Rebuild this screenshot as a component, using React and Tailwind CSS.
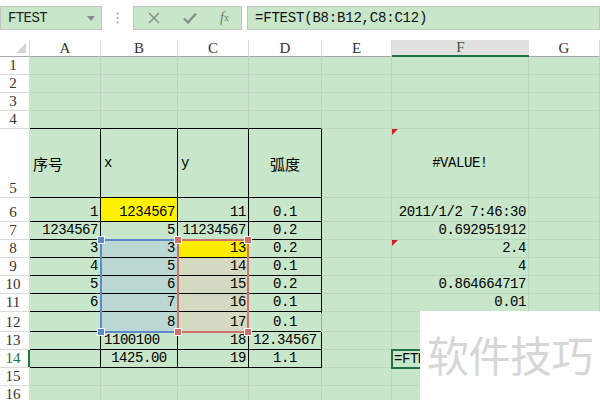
import React from "react";

const COLNAMES = ["A", "B", "C", "D", "E", "F", "G"];

const DATA = {
  5: { 0: ["序号", "l", "cjk"], 1: ["x", "l"], 2: ["y", "l"], 3: ["弧度", "c", "cjk"], 5: ["#VALUE!", "c"] },
  6: { 0: ["1", "r"], 1: ["1234567", "r"], 2: ["11", "r"], 3: ["0.1", "c"], 5: ["2011/1/2 7:46:30", "r"] },
  7: { 0: ["1234567", "r"], 1: ["5", "r"], 2: ["11234567", "r"], 3: ["0.2", "c"], 5: ["0.692951912", "r"] },
  8: { 0: ["3", "r"], 1: ["3", "r"], 2: ["13", "r"], 3: ["0.2", "c"], 5: ["2.4", "r"] },
  9: { 0: ["4", "r"], 1: ["5", "r"], 2: ["14", "r"], 3: ["0.1", "c"], 5: ["4", "r"] },
  10: { 0: ["5", "r"], 1: ["6", "r"], 2: ["15", "r"], 3: ["0.2", "c"], 5: ["0.864664717", "r"] },
  11: { 0: ["6", "r"], 1: ["7", "r"], 2: ["16", "r"], 3: ["0.1", "c"], 5: ["0.01", "r"] },
  12: { 1: ["8", "r"], 2: ["17", "r"], 3: ["0.1", "c"] },
  13: { 1: ["1100100", "l"], 2: ["18", "r"], 3: ["12.34567", "c"] },
  14: { 1: ["1425.00", "c"], 2: ["19", "r"], 3: ["1.1", "c"] },
};

function cellBg(r, c) {
  if (r === 6 && c === 1) return "bg-[#fff200]";
  if (r === 8 && c === 2) return "bg-[#fbec00]";
  if (c === 1 && r >= 8 && r <= 12) return "bg-[#bcd8d4]";
  if (c === 2 && r >= 9 && r <= 12) return "bg-[#d3dac1]";
  return "bg-[#c8e6c9]";
}

function cellBorder(r, c) {
  const inTable = r >= 5 && r <= 14 && c <= 3;
  if (inTable) return "border-r border-b border-black";
  if (r === 4 && c <= 3) return "border-r border-b border-r-[#bcd5be] border-b-black";
  return "border-r border-b border-[#bcd5be]";
}

function Cell({ r, c }) {
  const d = DATA[r] && DATA[r][c];
  const align = d ? d[1] : "l";
  const justify =
    align === "r" ? "justify-end pr-[2px]" : align === "c" ? "justify-center" : "justify-start pl-[3px]";
  const vert = r === 5 ? "items-center" : "items-end";
  const font = d && d[2] === "cjk"
    ? "font-['Noto_Sans_CJK_SC',sans-serif] text-[15px] tracking-[0px]"
    : "font-['Liberation_Mono',monospace] text-[14px] tracking-[-0.45px]";
  return (
    <div className={`flex ${vert} ${justify} ${cellBg(r, c)} ${cellBorder(r, c)} overflow-visible whitespace-nowrap text-black leading-[17px]`}>
      {d ? <span className={font}>{d[0]}</span> : null}
    </div>
  );
}

function RowHeader({ r }) {
  const active = r === 14;
  return (
    <div className={`relative flex items-end justify-center pr-[3px] bg-white border-r border-b border-[#dadada] leading-[17px] font-['Liberation_Serif',serif] text-[15px] ${active ? "text-[#217346]" : "text-[#333]"}`}>
      {r}
      {active ? <div className="absolute right-[-1px] top-0 bottom-0 w-[2px] bg-[#217346]" /> : null}
    </div>
  );
}

function ColHeader({ name }) {
  if (name === "F") {
    return (
      <div className="flex items-center justify-center bg-[#e1e1e1] border-b-2 border-[#217346] font-['Liberation_Serif',serif] text-[15px] text-[#2f5a3e] leading-none">
        {name}
      </div>
    );
  }
  return (
    <div className="flex items-center justify-center bg-white border-r border-b border-r-[#dadada] border-b-[#a8a8a8] font-['Liberation_Serif',serif] text-[15px] text-[#333] leading-none">
      {name}
    </div>
  );
}

function Handle({ color, pos }) {
  return <div className={`absolute w-[6px] h-[6px] outline outline-1 outline-white ${color} ${pos}`} />;
}

export default function App() {
  const rows = Array.from({ length: 16 }, (_, i) => i + 1);
  return (
    <div className="relative w-[600px] h-[400px] overflow-hidden bg-white">
      {/* toolbar */}
      <div className="flex items-start h-[40px] pt-[6px]">
        <div className="flex items-center w-[102px] h-[24px] bg-[#c8e6c9] border border-[#c4c4c4] pl-[7px] pr-[6px]">
          <span className="flex-1 font-['Liberation_Mono',monospace] text-[14px] tracking-[-0.6px] text-[#222]">FTEST</span>
          <svg width="8" height="5" viewBox="0 0 8 5"><path d="M0 0H8L4 5Z" fill="#8a8a8a" /></svg>
        </div>
        <div className="w-[31px] h-[24px] flex items-center justify-center">
          <svg width="3" height="12" viewBox="0 0 3 12">
            <circle cx="1.5" cy="1.5" r="1.1" fill="#a0a0a0" />
            <circle cx="1.5" cy="6" r="1.1" fill="#a0a0a0" />
            <circle cx="1.5" cy="10.5" r="1.1" fill="#a0a0a0" />
          </svg>
        </div>
        <div className="flex items-center w-[109px] h-[24px] bg-[#c8e6c9] border border-[#c4c4c4]">
          <div className="w-[38px] flex justify-center pl-[1px]">
            <svg width="12" height="12" viewBox="0 0 12 12"><path d="M1 1L11 11M11 1L1 11" stroke="#8b8b8b" strokeWidth="1.4" /></svg>
          </div>
          <div className="w-[36px] flex justify-center">
            <svg width="14" height="12" viewBox="0 0 14 12"><path d="M1 6.5L5 10.5L13 1.5" stroke="#8b8b8b" strokeWidth="2.4" fill="none" /></svg>
          </div>
          <div className="w-[33px] flex justify-center font-['Liberation_Serif',serif] italic text-[14px] text-[#777] leading-none">
            f<span className="text-[10px] not-italic relative top-[2px]">x</span>
          </div>
        </div>
        <div className="ml-[5px] flex-1 flex items-center h-[24px] bg-[#c8e6c9] border border-[#c4c4c4] pl-[7px] font-['Liberation_Mono',monospace] text-[14px] tracking-[-0.2px] text-[#111]">
          =FTEST(B8:B12,C8:C12)
        </div>
      </div>

      {/* sheet */}
      <div className="relative grid grid-cols-[30px_71px_77px_71px_73px_70px_137px_71px] grid-rows-[17px_18px_18px_18px_18px_69px_24px_18px_18px_18px_18px_18px_20px_18px_18px_18px_18px]">
        <div className="relative bg-white border-r border-b border-r-[#dadada] border-b-[#a8a8a8]">
          <svg className="absolute right-[3px] bottom-[3px]" width="10" height="10" viewBox="0 0 10 10"><path d="M10 0V10H0Z" fill="#d4d4d4" /></svg>
        </div>
        {COLNAMES.map((n) => (
          <ColHeader key={n} name={n} />
        ))}
        {rows.map((r) => (
          <React.Fragment key={r}>
            <RowHeader r={r} />
            {COLNAMES.map((_, c) => (
              <Cell key={c} r={r} c={c} />
            ))}
          </React.Fragment>
        ))}

        {/* comment / error triangles */}
        <svg className="absolute left-[392px] top-[89px]" width="6" height="6" viewBox="0 0 6 6"><path d="M0 0H6L0 6Z" fill="#d21f1f" /></svg>
        <svg className="absolute left-[392px] top-[200px]" width="6" height="6" viewBox="0 0 6 6"><path d="M0 0H6L0 6Z" fill="#d21f1f" /></svg>

        {/* small orange marker on D12 */}
        <div className="absolute left-[321px] top-[273px] w-[1px] h-[19px] bg-[#e8906f]" />

        {/* selection ranges */}
        <div className="absolute left-[100px] top-[199px] w-[79px] h-[94px] border-2 border-[#5f88c9]">
          <Handle color="bg-[#5f88c9]" pos="left-[-4px] top-[-4px]" />
          <Handle color="bg-[#5f88c9]" pos="left-[-4px] bottom-[-4px]" />
        </div>
        <div className="absolute left-[177px] top-[199px] w-[72px] h-[94px] border-2 border-[#cf706a]">
          <Handle color="bg-[#cf706a]" pos="left-[-4px] top-[-4px]" />
          <Handle color="bg-[#cf706a]" pos="left-[-4px] bottom-[-4px]" />
          <Handle color="bg-[#cf706a]" pos="right-[-4px] top-[-4px]" />
          <Handle color="bg-[#cf706a]" pos="right-[-4px] bottom-[-4px]" />
        </div>

        {/* active editing cell F14, running under the watermark */}
        <div className="absolute left-[391px] top-[309px] w-[29px] h-[20px] overflow-hidden border-2 border-r-0 border-[#217346] bg-[#c8e6c9] flex items-center pl-[1px] font-['Liberation_Mono',monospace] text-[14px] tracking-[-0.45px] text-black whitespace-nowrap">
          =FTEST(B8:B12,C8:C12)
        </div>
      </div>

      {/* watermark */}
      <div className="absolute left-[420px] top-[311px] w-[180px] h-[89px] bg-white flex items-center pl-[7px] pb-[4px]">
        <span className="font-['Noto_Sans_CJK_SC',sans-serif] text-[42px] leading-none tracking-[-0.5px] text-[#d6d6d6]">软件技巧</span>
      </div>
    </div>
  );
}
